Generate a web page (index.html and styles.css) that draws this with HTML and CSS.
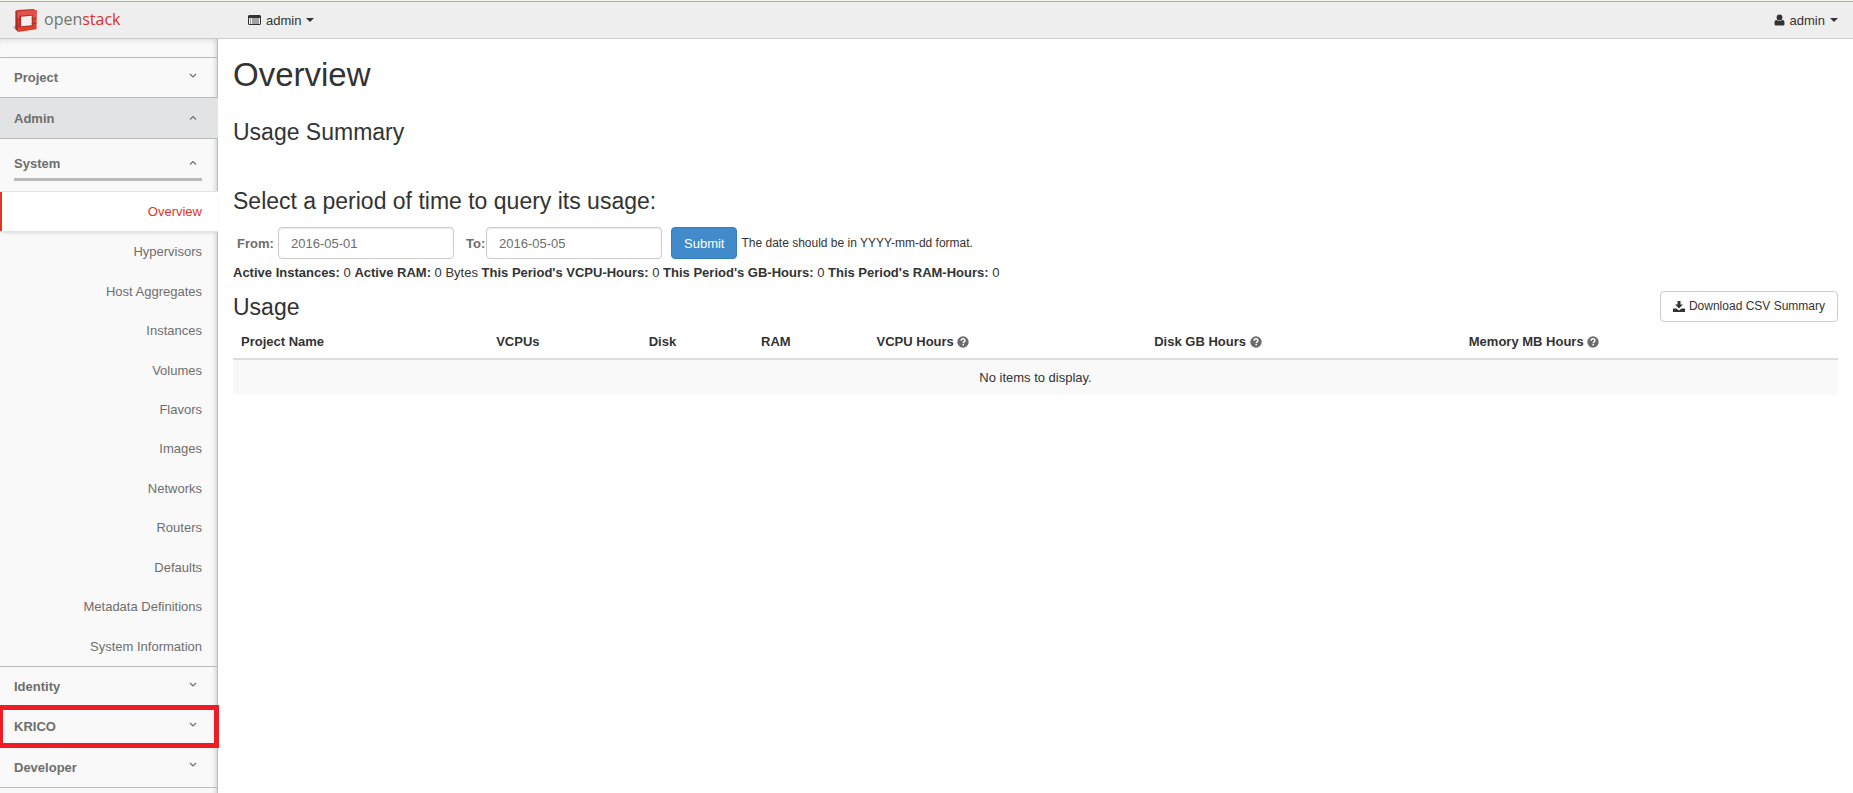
FILE: index.html
```html
<!DOCTYPE html>
<html lang="en">
<head>
<meta charset="utf-8">
<title>Usage Overview - OpenStack Dashboard</title>
<link rel="stylesheet" href="styles.css">
</head>
<body>
<svg class="sprite" aria-hidden="true">
  <symbol id="down" viewBox="0 0 8 6"><path d="M1 1l3 3 3-3" fill="none" stroke="currentColor" stroke-width="1.2"/></symbol>
  <symbol id="up" viewBox="0 0 8 6"><path d="M1 4.5l3-3 3 3" fill="none" stroke="currentColor" stroke-width="1.2"/></symbol>
  <symbol id="caret" viewBox="0 0 8 4"><path d="M0 0h8L4 4z" fill="currentColor"/></symbol>
  <symbol id="help" viewBox="0 0 12 12"><circle cx="6" cy="6" r="5.7" fill="#6b6b6b"/><path d="M4.2 4.700c0-2.500 3.700-2.400 3.700-.2 0 1.400-1.600 1.300-1.700 2.700M6.200 8v1.500" fill="none" stroke="#fff" stroke-width="1.500"/></symbol>
</svg>
<header class="topbar">
  <a class="brand" href="#">
    <svg class="brand-mark" viewBox="0 0 26 26" aria-hidden="true">
      <path d="M0 20l4-2v5z" fill="#b5b5b5"/>
      <path d="M3 3l2-1 17-1 3 2v3L5 8z" fill="#b93830"/>
      <path d="M3 3l3 2v20l-3-3z" fill="#a82b25"/>
      <path d="M5 4l20-2v20L6 25z" fill="#dc402e"/>
      <path d="M5 4l20-2v8L5 11z" fill="#e4504a"/>
      <path d="M7 8l14-1v12L7 20z" fill="#ab302a"/>
      <path d="M9 9l11-1v10L9 19z" fill="#f1f1f1"/>
      <path d="M3 11l5 1M3 18l5 1M20 11h5M20 16h5" stroke="#ab2c24" stroke-width=".8" fill="none"/>
    </svg>
    <span class="brand-name">open<b>stack</b></span>
  </a>
  <button class="menu" type="button">
    <svg class="list-icon" viewBox="0 0 13 10" aria-hidden="true"><path d="M1 0h11l1 1v8l-1 1H1L0 9V1z" fill="#333"/><path d="M1 3h11v6H1z" fill="#eee"/><path d="M2 4h1M2 6h1M2 8h1M4 4h7M4 6h7M4 8h7" stroke="#444" stroke-width=".9"/></svg>
    admin
    <svg class="caret"><use href="#caret"/></svg>
  </button>
  <button class="menu menu-user" type="button">
    <svg class="user-icon" viewBox="0 0 10 12" aria-hidden="true"><path d="M2 6C0 6 0 8 0 10q0 1.500 1.500 1.500h7Q10 11.500 10 10C10 8 10 6 8 6Q5 8 2 6z" fill="#333"/><circle cx="5" cy="3.500" r="2.900" fill="#333"/></svg>
    admin
    <svg class="caret"><use href="#caret"/></svg>
  </button>
</header>
<div class="layout">
  <nav class="sidebar">
    <a class="group" href="#">Project<svg class="chev"><use href="#down"/></svg></a>
    <a class="group group-open" href="#">Admin<svg class="chev"><use href="#up"/></svg></a>
    <a class="panel-title" href="#">System<svg class="chev"><use href="#up"/></svg></a>
    <a class="item-active" href="#">Overview</a>
    <ul class="items">
      <li><a href="#">Hypervisors</a></li>
      <li><a href="#">Host Aggregates</a></li>
      <li><a href="#">Instances</a></li>
      <li><a href="#">Volumes</a></li>
      <li><a href="#">Flavors</a></li>
      <li><a href="#">Images</a></li>
      <li><a href="#">Networks</a></li>
      <li><a href="#">Routers</a></li>
      <li><a href="#">Defaults</a></li>
      <li><a href="#">Metadata Definitions</a></li>
      <li><a href="#">System Information</a></li>
    </ul>
    <a class="group" href="#">Identity<svg class="chev"><use href="#down"/></svg></a>
    <a class="group group-marked" href="#">KRICO<svg class="chev"><use href="#down"/></svg></a>
    <a class="group group-plain" href="#">Developer<svg class="chev"><use href="#down"/></svg></a>
    <div class="sidebar-end"></div>
  </nav>
  <main class="content">
    <h1>Overview</h1>
    <h3 class="summary-title">Usage Summary</h3>
    <h3 class="period-title">Select a period of time to query its usage:</h3>
    <form class="period">
      <label class="from" for="from">From:</label>
      <input id="from" type="text" value="2016-05-01">
      <label class="to" for="to">To:</label>
      <input id="to" type="text" value="2016-05-05">
      <button class="submit" type="submit">Submit</button>
      <small>The date should be in YYYY-mm-dd format.</small>
    </form>
    <p class="stats"><b>Active Instances:</b> 0 <b>Active RAM:</b> 0 Bytes <b>This Period's VCPU-Hours:</b> 0 <b>This Period's GB-Hours:</b> 0 <b>This Period's RAM-Hours:</b> 0</p>
    <div class="table-head">
      <h3>Usage</h3>
      <a class="download" href="#"><svg class="dl-icon" viewBox="0 0 12 11" aria-hidden="true"><path d="M4.500 0h3v3.500h2.500L6 7.500 2 3.500h2.500zM0 7.500h3.500L6 9.500l2.500-2H12V11H0z" fill="#333"/></svg>Download CSV Summary</a>
    </div>
    <table class="usage">
      <colgroup><col class="c-name"><col class="c-vcpus"><col class="c-disk"><col class="c-ram"><col class="c-vh"><col class="c-dh"><col class="c-mh"></colgroup>
      <thead>
        <tr><th>Project Name</th><th>VCPUs</th><th>Disk</th><th>RAM</th><th>VCPU Hours <svg class="help"><use href="#help"/></svg></th><th>Disk GB Hours <svg class="help"><use href="#help"/></svg></th><th>Memory MB Hours <svg class="help"><use href="#help"/></svg></th></tr>
      </thead>
      <tbody><tr><td colspan="7">No items to display.</td></tr></tbody>
    </table>
  </main>
</div>
</body>
</html>
```
FILE: styles.css
```css
* { box-sizing: border-box; }
body {
  margin: 0;
  min-height: 100vh;
  display: flex;
  flex-direction: column;
  border-top: 1px solid #f4f4ee;
  background: #fff;
  color: #333;
  font: 13px/19px "Liberation Sans", Arial, sans-serif;
}
a { color: inherit; text-decoration: none; }
h1, h3 { margin: 0; font-weight: 400; }
.sprite { position: absolute; width: 0; height: 0; }

.topbar {
  display: flex;
  align-items: center;
  height: 38px;
  padding: 0 15px 0 12px;
  background: #eee;
  border-top: 1px solid #aaad9f;
  border-bottom: 1px solid #ccc;
}
.brand { display: flex; align-items: center; gap: 6px; width: 236px; }
.brand-mark { width: 26px; height: 25px; }
.brand-name { padding-bottom: 2px; color: #75756f; font: 16px/24px "Open Sans", sans-serif; }
.brand-name b { color: #d9312c; font-weight: 400; }
.menu {
  display: flex;
  align-items: center;
  gap: 5px;
  padding: 0;
  border: 0;
  background: none;
  color: #333;
  font: inherit;
}
.menu-user { margin-left: auto; }
.list-icon { width: 13px; height: 10px; }
.user-icon { width: 11px; height: 12px; }
.caret { width: 8px; height: 4px; }

.layout { display: flex; flex: 1; }
.sidebar {
  flex: 0 0 218px;
  display: flex;
  flex-direction: column;
  padding-top: 18px;
  border-right: 1px solid #bbb;
  background: #f9f9f9;
  box-shadow: inset -5px 0 5px -4px #ccc, inset 0 6px 6px -5px #ddd;
  color: #6e6e6e;
}
.group {
  position: relative;
  display: flex;
  align-items: center;
  justify-content: space-between;
  height: 40px;
  padding: 0 20px 0 14px;
  border-top: 1px solid #b8babb;
  font-weight: 700;
}
.chev { width: 8px; height: 6px; margin-bottom: 4px; }
.group-open {
  height: 42px;
  margin-right: -1px;
  padding-right: 21px;
  border-bottom: 1px solid #b8babb;
  background: #e2e3e5;
}
.group-open .chev, .panel-title .chev { margin: 0; }
.panel-title {
  display: flex;
  align-items: center;
  justify-content: space-between;
  height: 42px;
  margin: 0 15px 10px 14px;
  padding: 10px 5px 1px 0;
  border-bottom: 3px solid #b8babb;
  font-weight: 700;
}
.item-active {
  height: 41px;
  margin-right: -1px;
  padding: 10px 16px 10px 0;
  border: solid #e2e3e5;
  border-width: 1px 0;
  background: #fff;
  box-shadow: inset 2px 0 #dd3726, 0 2px 4px -2px #ccc;
  color: #dd3726;
  text-align: right;
}
.items {
  display: grid;
  grid-auto-rows: 1fr;
  min-height: 434px;
  margin: 0;
  padding: 0 15px 0 0;
  list-style: none;
}
.items a { display: flex; align-items: center; justify-content: flex-end; height: 100%; }
.group-marked { border-color: transparent; }
.group-marked::after {
  content: "";
  position: absolute;
  inset: -2px;
  border: 5px solid #ee1c25;
}
.group-plain { height: 41px; border-color: transparent; }
.sidebar-end { border-top: 1px solid #b8babb; }

.content { flex: 1; padding: 14px 15px 0; }
h1 { font-size: 33px; line-height: 44px; }
h3 { font-size: 23px; line-height: 28px; }
.summary-title { margin-top: 21px; }
.period-title { margin-top: 41px; }
.period { display: flex; align-items: center; margin-top: 12px; }
.period label { color: #6e6e6e; font-weight: 700; }
.period .from { width: 45px; padding-left: 4px; }
.period .to { width: 32px; padding-left: 12px; }
.period input {
  width: 176px;
  height: 32px;
  padding: 6px 12px;
  border: 1px solid #ccc;
  border-radius: 4px;
  box-shadow: inset 0 1px 1px #ececec;
  color: #6e6e6e;
  font: inherit;
}
.submit {
  height: 32px;
  margin: 0 4px 0 9px;
  padding: 0 12px;
  border: 1px solid #357ebd;
  border-radius: 4px;
  background: #428bca;
  color: #fff;
  font: inherit;
}
.period small { font-size: 12px; }
.stats { margin: 4px 0 0; }
.table-head { display: flex; align-items: center; justify-content: space-between; margin-top: 9px; }
.download {
  display: flex;
  align-items: center;
  gap: 4px;
  height: 31px;
  padding: 0 12px;
  border: 1px solid #ccc;
  border-radius: 4px;
  font-size: 12px;
}
.dl-icon { width: 12px; height: 11px; }
.usage { width: 100%; border-collapse: collapse; table-layout: fixed; }
.usage th { padding: 10px 8px 7px; border-bottom: 2px solid #ddd; text-align: left; white-space: nowrap; }
.usage td { padding: 8px; background: #f9f9f9; text-align: center; }
.help { width: 12px; height: 12px; vertical-align: -2px; }
.c-name { width: 15.9%; }
.c-vcpus { width: 9.5%; }
.c-disk { width: 7%; }
.c-ram { width: 7.2%; }
.c-vh { width: 17.3%; }
.c-dh { width: 19.6%; }
.c-mh { width: 23.5%; }
```
